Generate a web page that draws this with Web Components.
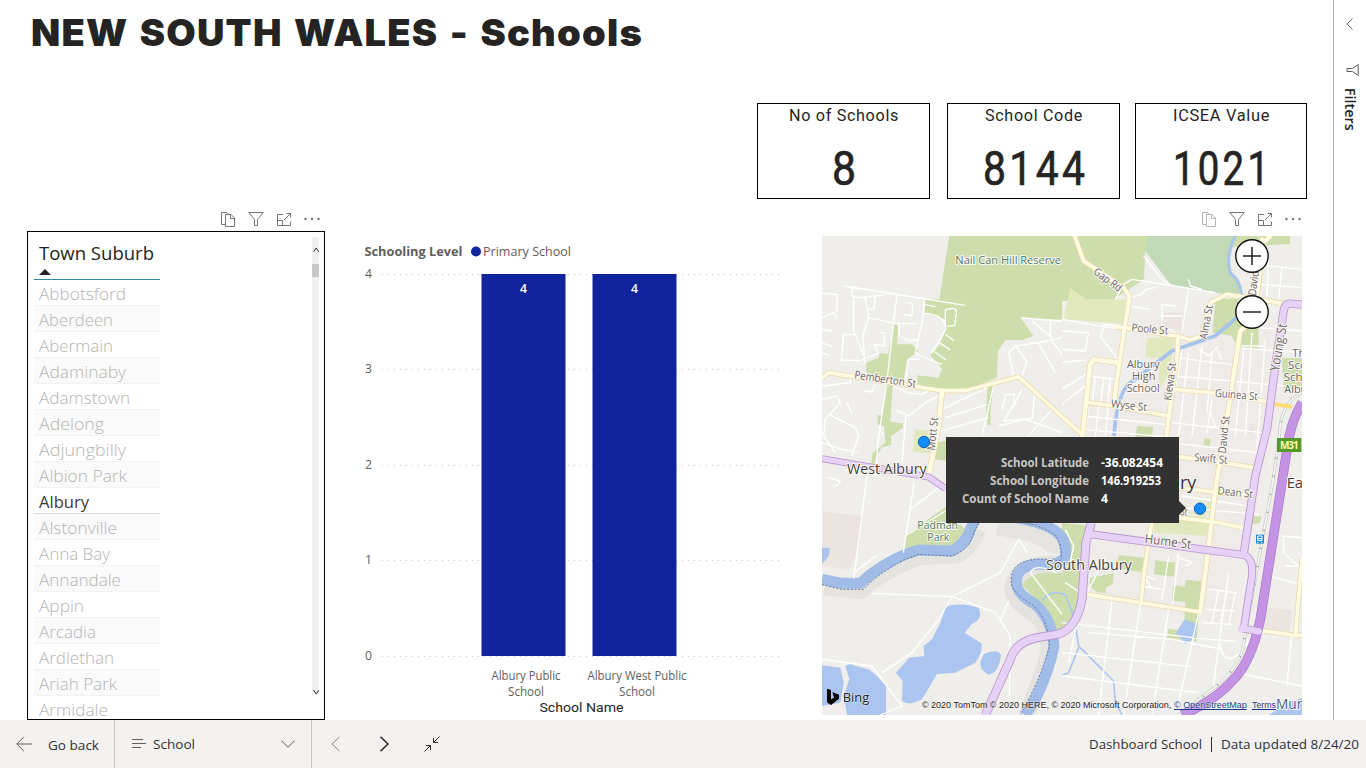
<!DOCTYPE html>
<html lang="en">
<head>
<meta charset="utf-8">
<title>New South Wales - Schools</title>
<style>
html,body{margin:0;height:100%;overflow:hidden;background:#fff}
body{font-family:"Open Sans","Noto Sans",sans-serif;color:#252423}
</style>
</head>
<body>
<school-report></school-report>
<script>
const define = (name, html, setup) => customElements.define(name, class extends HTMLElement {
  connectedCallback() {
    if (this.shadowRoot) return;
    const root = this.attachShadow({mode: 'open'});
    root.innerHTML = typeof html === 'function' ? html(this) : html;
    if (setup) setup(this, root);
  }
});

/* One line of text, stretched horizontally to the width in its "w" attribute. */
define('fit-text', el => `<style>
:host{display:block;white-space:nowrap;width:${el.getAttribute('w')}px}
span{display:inline-block;transform-origin:0 50%}
</style><span><slot></slot></span>`, (el, root) => {
  const s = root.querySelector('span');
  const w = s.getBoundingClientRect().width;
  if (w) s.style.transform = `scaleX(${el.getAttribute('w') / w})`;
});

const icons = {
  copy: '<path d="M5.500 13.500H1.500V1.500H7l2.500 2.500M5.500 3.500H11l3.500 3.500V15.500H5.500ZM10.500 3.500V7.500H14.500"/>',
  filter: '<path d="M.8 1.500H15.300L9.500 8.500V14.500H6.500V8.500Z"/>',
  focus: '<path d="M7 3.500H1.500V14.500H14.500V10.500M1.500 9.500H6.500V14.500M8 9L14.300 2.700M10.500 2.500H14.500V6.500"/>',
  more: '<g fill="currentColor" stroke="none"><circle cx="1.500" cy="8" r="1.200"/><circle cx="8" cy="8" r="1.200"/><circle cx="14.500" cy="8" r="1.200"/></g>',
  back: '<path d="M16 8H.8M8 .8L.8 8L8 15.200"/>',
  list: '<path d="M1 3.500H12M1 7.500H15M1 11.500H10"/>',
  down: '<path d="M1.300 4.500L8 11.300L14.700 4.500"/>',
  prev: '<path d="M11.500 .8L4 8L11.500 15.200"/>',
  next: '<path d="M4.500 .8L12 8L4.500 15.200"/>',
  shrink: '<path d="M15.500 .5L9.500 6.500M9.500 1.800V6.500H14.200M.5 15.500L6.500 9.500M1.800 9.500H6.500V14.200"/>',
  chevron: '<path d="M10.500 2.500L5 8L10.500 13.500"/>',
  funnelSide: '<path d="M14.200 2.500V13.500L8.500 9.500H3V6.500H8.500Z"/>'
};
define('line-icon', el => `<style>:host{display:block;width:16px;height:16px;color:#605e5c}svg{display:block;fill:none;stroke:currentColor;stroke-width:${el.getAttribute('weight') || 1}}</style>
<svg width="16" height="16" viewBox="0 0 16 16">${icons[el.getAttribute('name')]}</svg>`);

define('visual-tools', el => `<style>:host{display:flex;gap:12px;justify-content:flex-end;box-sizing:border-box;padding-top:12px}line-icon{opacity:.85}line-icon.dim{opacity:${el.hasAttribute('dim') ? .45 : .85}}</style>
<line-icon class="dim" name="copy"></line-icon><line-icon name="filter"></line-icon><line-icon name="focus"></line-icon><line-icon name="more"></line-icon>`);

define('stat-card', el => `<style>
:host{display:flex;flex-direction:column;align-items:center;box-sizing:border-box;height:96px;border:1px solid #000;background:#fff;font-family:Roboto,sans-serif}
.t{font-size:17px;line-height:24px;margin-top:-1px;letter-spacing:.7px}
.v{font-size:48px;line-height:56px;margin-top:14px;-webkit-text-stroke:.7px #252423}
</style><fit-text class="t" w="${el.getAttribute('tw')}">${el.getAttribute('label')}</fit-text>
<fit-text class="v" w="${el.getAttribute('vw')}"><span style="letter-spacing:4px;margin-right:-4px"><slot></slot></span></fit-text>`);

const towns = [['Abbotsford',87],['Aberdeen',74],['Abermain',74],['Adaminaby',87],['Adamstown',91],['Adelong',65],['Adjungbilly',87],['Albion Park',88],['Albury',50],['Alstonville',78],['Anna Bay',71],['Annandale',82],['Appin',45],['Arcadia',57],['Ardlethan',75],['Ariah Park',78],['Armidale',69]];
define('town-list', `<style>
:host{display:flex;justify-content:space-between;box-sizing:border-box;width:298px;height:489px;border:1px solid #000;overflow:hidden;padding:5px 5px 0 6px}
.col{width:126px}
.head{height:42px;border-bottom:1px solid #2f8aa0;box-sizing:content-box}
.head fit-text{font-size:18px;line-height:32px;padding-left:4.500px}
.tri{width:0;margin-left:5px;border:6.500px solid transparent;border-top:0;border-bottom:6px solid #252423}
.row{height:26px;box-sizing:border-box;border-bottom:1px solid #f3f3f3;padding-left:4.500px;font-size:16.500px;line-height:28px;color:#b5b4b3;font-weight:300}
.row:nth-child(odd){background:#fafafa}
.row.on{color:#3a3938;border-color:#ddd;background:#fff;font-weight:400}
.bar{width:7px;height:458px;background:#f0f0f0;display:flex;flex-direction:column}
.bar svg{display:block;fill:none;stroke:#333}
.thumb{height:13px;background:#c8c8c8;margin:11px 0 auto}
</style>
<div class="col"><div class="head"><fit-text w="115">Town Suburb</fit-text><div class="tri"></div></div>
${towns.map(([n, w]) => `<div class="row${n === 'Albury' ? ' on' : ''}"><fit-text w="${w}">${n}</fit-text></div>`).join('')}</div>
<div class="bar"><svg width="7" height="16"><path d="M1.500 15L4.200 11L7 15"/></svg><div class="thumb"></div><svg width="7" height="5"><path d="M1.500 0L4.200 4L7 0"/></svg></div>`);

/* Column chart: school count by school name. */
const label = (x, y, w, t, extra = '') => `<text x="${x}" y="${y}" textLength="${w}" lengthAdjust="spacingAndGlyphs" ${extra}>${t}</text>`;
define('school-chart', `<style>:host{display:block;width:440px;height:490px}svg{display:block;font-size:12px;fill:#605e5c}.g{stroke:#c4c4c4;stroke-dasharray:1 5}</style>
<svg width="440" height="490" viewBox="0 0 440 490">
${label(14.500, 26, 98, 'Schooling Level', 'font-weight="700" font-size="12.500"')}
<circle cx="126" cy="21.500" r="5" fill="#12239e"/>${label(133, 26, 88, 'Primary School', 'font-size="12.500"')}
${[4, 3, 2, 1, 0].map((v, i) => `<path class="g" d="M32 ${[44.500, 139.500, 235.500, 330.500, 426.500][i]}H431"/>${label(15, [48, 143, 239, 334, 430][i], 7, v)}`).join('')}
<path d="M131.500 44H215.500V426H131.500ZM242.500 44H326.500V426H242.500Z" fill="#12239e"/>
<g fill="#fff" font-weight="600">${label(170, 63, 7, 4)}${label(281, 63, 7, 4)}</g>
${label(141.500, 450, 69, 'Albury Public')}${label(158, 466, 36, 'School')}
${label(237.500, 450, 99, 'Albury West Public')}${label(269, 466, 36, 'School')}
<g fill="#252423" font-family="Roboto" font-size="13">${label(189.500, 482, 84, 'School Name')}</g>
</svg>`);

/* Street map. Drawing units are thirds of a pixel. */
const parks = `M382 0H1403L1405 24L970 45L966 129L958 135L872 193L720 195V251L596 245L634 300L600 312H550L528 345L525 425L430 462L360 460L285 445L287 418L350 425L360 398L325 358L350 330L368 290L371 250L308 232L310 190L352 190Z
M215 266L228 268L225 325L270 325L290 345L255 370L245 432L200 425L133 410L132 380L170 365L172 352L198 354Z
M193 448L212 450L205 558L243 562V575L207 600L208 626L178 634L156 684L148 720H143L152 650L190 620L186 570L167 565V538L180 538Z
M497 450L515 447L505 530L506 568L497 566L492 520Z
M338 620L372 614V674L336 670Z
M253 896L372 812V850L420 870L452 900L420 930L244 950Z
M1180 188H1250L1260 245L1300 270H1310V340L1246 335L1230 300L1172 290Z
M945 570L993 573L990 604H940Z M1147 607L1166 610L1164 630L1145 628Z
M1380 365L1440 366V460H1385Z
M600 1005L680 980L720 1000V860L810 870L798 910L775 1100L745 1160L700 1200L670 1130L630 1080L596 1040Z
M890 957L964 965L960 1008L886 998Z M1000 973L1060 980L1055 1022L996 1015Z
M804 1025L875 1012L872 1045L852 1055L850 1072L826 1068L804 1054Z
M1054 1048L1088 1052L1092 1032L1140 1036L1130 1128L1124 1216L1035 1206L1039 1178L1086 1184L1090 1098L1050 1094Z
M1292 840L1318 842L1314 860L1290 865Z`;
const pale = `M745 155L790 190L910 190L904 263L726 250L730 220Z M975 305L1060 302L1040 420L1010 460L1012 365H970Z M278 580L330 585L322 652L272 648Z M996 830L1150 842L1155 790L1095 805L1080 825L1170 850L1150 900L996 890Z M1100 800L1178 795L1170 835L1090 825Z`;
const minor = `M68 150L430 208M90 152V180L130 187L140 245L122 300L130 385M95 180V285L130 370M225 172L193 450L170 600L160 720M308 188L300 260L280 350L295 360L360 385M308 232Q370 235 371 280L330 350M370 295L396 314M352 320L385 342M338 347L372 372M305 205L340 212M370 222Q405 210 403 230L398 268L370 272V222M0 172L45 175V225L0 246M30 228L45 245M0 280L30 285M0 320L32 332M0 352L25 358M105 185L160 180L155 220H138M155 180L185 177M138 245L220 262L285 263M250 200L272 202L270 240L245 235M230 265L232 300L265 315L290 310M65 296H100M65 296L58 372L115 374L170 352L155 325L186 330L188 290L170 290M260 370L250 432M262 370H292
M0 450L85 440L86 420M0 490L45 480L55 500L10 550L5 600L40 650M0 620L60 640L110 650M20 535L100 575L110 600L90 660M75 500L90 535M125 465L150 468L160 445M215 450L255 470L300 475L325 460M220 520L260 540L310 500L350 480M252 535L240 680M170 570L185 600M360 520L420 490L497 455M370 545L496 505M340 590L500 545M480 600L515 450M540 520L552 475L578 475L575 505L545 555L630 548L640 455M600 460L575 510M530 570L610 550L720 590M620 598L690 520M525 440L600 424M575 420L560 350L580 330L650 320L720 305M582 330L615 378L600 420M650 322L700 410M688 312L720 355M630 255L690 305M685 250V308M596 245L650 250L720 255
M965 60L1020 130L1045 145M880 190L905 145L930 130L1045 148L1180 170M1100 130L1105 150L1140 160M920 182Q960 185 970 160L1000 155M920 210L985 220M1100 155L1080 290M1020 205L1060 210M1020 240H1080M1020 205V270L1060 290M840 267H895M720 250L840 272L900 280M845 275L835 300L895 380M720 285L800 290L790 345L720 340M720 380L790 372M720 460L800 410M720 505L790 450M1067 365L1180 380L1230 385M1060 420L1390 450M1080 340L1060 460M1100 345L1070 600M1140 330L1110 600M1170 350L1155 530M1130 340L1160 360L1190 330M1185 340L1200 370M1240 335L1440 350M1265 340L1240 600M1290 290L1270 600M1330 310L1300 700M800 420L885 430M820 425L810 500M845 425L835 510M865 430L855 520M780 540L1030 565M780 580L1030 602M800 510L790 602M830 510L820 602M860 500L850 602M1050 560L1320 590M1040 620L1310 650M1165 530L1180 570L1160 575M1170 490L1155 590M1310 275L1440 285M1340 90L1440 100M1320 145L1440 155M1380 90L1370 195M1320 40L1340 50L1335 195M1250 330L1330 330
M135 720L95 1028M276 740L244 950M265 820L370 740M250 900L370 825M95 1010L165 958M20 725L55 735L40 755M150 1072L390 1082L535 1010L590 910L615 950M390 1082L520 1130L565 1200L562 1380M535 1150L560 1095M390 1082L350 1150L270 1250L180 1310M0 1270L150 1290L240 1410L175 1437M720 1135L625 1010Q640 980 700 1010L720 990
M730 880L755 930L740 1000M730 1040L790 1080M720 1160L1160 1210L1240 1215M720 1250L1110 1292M720 1320L1130 1370M780 1080L740 1280M870 1090L830 1437M955 1105L905 1437M1040 1120L990 1437M1130 1130L1070 1400M1220 1010L1170 1380M1160 1060L1245 1070M1150 1120L1240 1125M1140 1160L1230 1165M1160 1060L1240 1070L1220 1170M1190 1060L1170 1160M1215 1065L1195 1160M1190 960L1280 970M1080 780L1280 810M1080 815L1310 835M850 965L790 1080M1070 950L1050 1120M960 1050L1020 1060M970 1020L1000 1030M1060 960L1110 980L1090 990M800 1190L1050 1210L1200 1240M1190 1210Q1210 1330 1290 1200M1380 900L1440 905M1385 900V950L1440 1000M1390 990L1440 990M1340 1020L1440 1045M1410 1180L1395 1350M1240 1310L1440 1350M960 1010L990 1060M1040 960L1020 1090`;
const yellow = [
  ['M0 425L20 410L95 422L270 450L360 464H430L590 422L720 542L780 595V610', 11],
  ['M360 464L350 570L320 720', 14], ['M758 0L785 75L905 155L923 182L910 260L885 430L876 500', 12],
  ['M880 272L960 283L1035 297L1065 300L1105 312L1140 300L1150 250L1165 200L1215 175L1400 205', 11],
  ['M1067 300V350L1050 470L1032 610', 12], ['M780 610L805 385L815 370L885 380', 14],
  ['M800 500L880 510L1040 540', 11], ['M1060 460L1220 475L1345 500', 11],
  ['M1345 0L1330 15M1320 10L1310 140L1295 250L1255 285L1230 450L1205 610L1180 760L1165 890L1135 1128', 13],
  ['M1000 652L1200 680L1310 697', 11], ['M1070 755L1190 770L1290 780', 11], ['M1065 845L1190 860L1260 875', 11],
  ['M990 850L965 1020L957 1102', 11], ['M795 1075L1135 1128', 11], ['M1325 1185L1420 1198H1440M1420 1198L1440 970', 11]
];
const purple = [
  ['M0 668L100 685L200 702L320 723L370 757', 16],
  ['M1440 206L1402 203Q1388 205 1385 225L1360 390L1335 580L1300 720L1265 955', 20],
  ['M808 860L792 920L780 1090Q765 1175 710 1194L640 1206Q580 1220 565 1270L490 1437', 22],
  ['M808 895L1265 957Q1295 965 1290 1020L1265 1178L1310 1186', 19]
];
const rail = 'M1440 470Q1375 500 1372 600L1352 740L1312 960L1262 1240Q1240 1310 1170 1360L1070 1437';
const motorway = 'M1440 500Q1405 560 1395 640L1375 770L1345 960L1315 1150Q1290 1270 1240 1325Q1180 1395 1080 1437';
const strip = (a, c, extra, cap = 'round') => a.map(([d, w]) => `<path d="${d}" stroke="${c}" stroke-width="${w + extra}" fill="none" stroke-linejoin="round" stroke-linecap="${cap}"/>`).join('');
const spin = (x, y, w, a, t, size = 30, extra = '') => `<text transform="translate(${x} ${y}) rotate(${a})" textLength="${w}" lengthAdjust="spacingAndGlyphs" font-size="${size}" ${extra}>${t}</text>`;

define('street-map', `<style>
:host{display:block;position:relative;width:480px;height:479px;overflow:hidden;background:#efeeeb}
svg.map{display:block}
.lb text{paint-order:stroke;stroke:#fbfaf6;stroke-width:6px;stroke-linejoin:round;fill:#6b6460}
.zoom{position:absolute;left:412px;width:36px;height:36px}
</style>
<svg class="map" width="480" height="479" viewBox="0 0 1440 1437">
<path d="M960 250H1340V720H960Z M720 480H1380L1270 955L800 900ZM810 920H1260L1240 1170L780 1080Z" fill="#eeeae7" opacity=".6"/>
<path d="M0 825L120 840L110 940L80 1000L0 990Z M868 192L912 194L908 228L870 224Z M1030 228L1080 230L1075 285L1010 265Z M1330 1115L1410 1122L1405 1185L1325 1180Z M1285 560L1300 565L1290 600L1280 595Z" fill="#ece4e1"/>
<path d="${parks}" fill="#cdddab"/><path d="${pale}" fill="#e2e8bd"/>
<path d="M978 0H1236L1218 50V95L1260 165L1240 180L1045 145L970 45Z" fill="#c2d9b8"/>
<path d="M1240 0Q1210 60 1225 110Q1260 140 1258 180" fill="none" stroke="#a9c4ea" stroke-width="9"/>
<path d="M876 600Q885 470 925 440L1050 345L1180 300L1250 240" fill="none" stroke="#a6c3ee" stroke-width="11"/>
<g fill="none" stroke="#e4e3df" stroke-linejoin="round" transform="translate(6 22)"><path d="M0 1036L110 1048Q150 1010 230 968L290 945L400 940Q450 910 466 860" stroke-width="40"/><path d="M520 850L560 858Q700 880 690 930M720 965Q590 950 566 1030Q560 1070 640 1120Q690 1170 666 1260L600 1437" stroke-width="50"/></g>
<g fill="none" stroke="#a1bce6" stroke-width="33" stroke-linejoin="round"><path d="M0 1030L60 1042H115Q170 990 250 955L290 942L390 945Q435 920 445 880L470 830"/><path d="M540 840Q650 850 700 885Q735 910 730 960Q720 990 650 984Q570 990 586 1055Q595 1080 640 1105Q690 1150 696 1230Q680 1310 640 1390L610 1437"/></g>
<g fill="none" stroke="#66789a" stroke-width="3" stroke-dasharray="6 5"><path d="M0 1046L60 1060H125Q170 1010 250 970L290 955L390 960Q445 940 455 890L480 840M540 852Q650 858 700 898Q720 920 718 970M718 975Q560 950 568 1040Q570 1070 630 1105Q680 1150 682 1230Q660 1320 595 1437"/></g>
<g fill="#acc5f0"><path d="M372 1112Q410 1098 470 1115Q485 1148 450 1163L428 1190L478 1222Q485 1245 460 1280L400 1310L345 1314Q325 1350 300 1390Q260 1412 240 1395L242 1335L222 1310L262 1265L307 1260L305 1230L330 1210L355 1160Z"/><path d="M485 1255Q530 1235 537 1260Q530 1310 500 1316Q470 1300 476 1275Z"/><path d="M0 1288L55 1295L65 1340L55 1400L0 1410ZM70 1290Q85 1280 100 1290L140 1300L165 1320L192 1350V1437H75L65 1380L82 1330Z"/><path d="M0 935L22 935Q28 960 0 982Z"/><path d="M1088 1150L1125 1165L1120 1205L1090 1225L1062 1190Z"/><path d="M1340 1437L1390 1405L1440 1385V1437Z"/></g>
<path d="M762 1180L770 1230L875 1335L880 1400L900 1437M770 1235L740 1310L720 1318M660 1095Q680 1060 730 1075L755 1140" fill="none" stroke="#acc5f0" stroke-width="5"/>
<path d="${minor}" fill="none" stroke="#fff" stroke-width="4" stroke-linejoin="round"/>
<path d="${rail}" fill="none" stroke="#c9c9c8" stroke-width="9"/><path d="${rail}" fill="none" stroke="#f6f6f5" stroke-width="5"/><path d="${rail}" fill="none" stroke="#999" stroke-width="7" stroke-dasharray="3 52"/>
${strip(yellow, '#ead6a4', 4, 'butt')}${strip(yellow, '#fffbe2', 0)}
<path d="M1355 504L1410 512" stroke="#ffdc75" stroke-width="12"/>
<path d="${motorway}" fill="none" stroke="#a878ca" stroke-width="29"/><path d="${motorway}" fill="none" stroke="#c493e4" stroke-width="25"/>
${strip(purple, '#b995cd', 5, 'butt')}${strip(purple, '#e6d1f7', 0)}<circle cx="1260" cy="1178" r="12" fill="#e6d1f7"/>
<g class="lb" font-family="'Open Sans','Noto Sans',sans-serif">
<g font-size="35">${label(400, 84, 317, 'Nail Can Hill Reserve', 'style="fill:#527a5e"')}${label(286, 879, 122, 'Padman', 'style="fill:#527a5e"')}${label(316, 915, 66, 'Park', 'style="fill:#527a5e"')}
${label(915, 396, 98, 'Albury')}${label(930, 432, 70, 'High')}${label(914, 468, 99, 'School')}
${label(1411, 363, 58, 'The')}${label(1398, 399, 86, 'Scots')}${label(1385, 435, 108, 'School')}${label(1387, 471, 98, 'Albury')}</g>
${spin(96, 427, 186, 8.500, 'Pemberton St', 33)}${spin(338, 644, 100, -84, 'Mott St', 33)}
${spin(812, 112, 96, 36, 'Gap Rd', 33)}${spin(928, 286, 110, 5, 'Poole St', 33)}${spin(866, 514, 108, 6, 'Wyse St', 33)}
${spin(1155, 311, 103, -80, 'Alma St', 33)}${spin(1048, 495, 115, -83, 'Kiewa St', 33)}${spin(1178, 482, 129, 5, 'Guinea St', 33)}${spin(1211, 653, 113, -84, 'David St', 33)}${spin(1301, 180, 74, -82, 'David', 33)}
${spin(1370, 407, 144, -80, 'Young St', 39)}${spin(1116, 675, 100, 5, 'Swift St', 33)}${spin(1186, 775, 106, 6, 'Dean St', 33)}${spin(1055, 835, 40, 6, 'e St', 33)}${spin(967, 921, 140, 7, 'Hume St', 39)}
<g font-size="42" style="font-weight:400">${label(75, 713, 239, 'West Albury', 'style="fill:#45413f"')}${label(672, 1003, 257, 'South Albury', 'style="fill:#45413f"')}${label(1394, 756, 86, 'East', 'style="fill:#45413f"')}</g>
<text x="1074" y="760" font-size="54" style="fill:#373331">ry</text>
<text x="1362" y="1419" font-size="41" style="fill:#4560a0">Murr</text><text x="1358" y="1466" font-size="40" style="fill:#4560a0">River</text>
</g>
<path d="M1365 606H1438V648H1365Z" fill="#55992a"/><text x="1374" y="638" font-family="Open Sans" font-weight="700" font-size="30" fill="#ffffa8" textLength="56">M31</text>
<rect x="1302" y="896" width="24" height="27" fill="#188bd2"/><path d="M1307 900H1320V914H1307ZM1309 918L1305 922M1318 918L1322 922M1308 908H1320" fill="none" stroke="#fff" stroke-width="3"/>
<g fill="#118dff" stroke="#1262ad" stroke-width="3"><circle cx="306" cy="618" r="17"/><circle cx="1134" cy="818" r="17"/></g>
<path d="M15 1358L27 1362V1390L36 1385L31 1368L51 1376V1388L27 1407L15 1399Z" fill="#000"/>
<g font-family="Open Sans" font-size="40" fill="#252423">${label(62, 1399, 80, 'Bing', 'stroke="#fff" stroke-opacity=".6" stroke-width="3" paint-order="stroke"')}</g>
<g font-family="Liberation Sans" font-size="29" fill="#222" stroke="#fff" stroke-opacity=".6" stroke-width="3" paint-order="stroke">${label(300, 1416, 748, '© 2020 TomTom © 2020 HERE, © 2020 Microsoft Corporation,')}<g fill="#173a8c">${label(1056, 1416, 218, '© OpenStreetMap')}${label(1290, 1416, 72, 'Terms')}</g></g>
<path d="M1056 1420.500H1274M1290 1420.500H1362" stroke="#173a8c" stroke-width="3"/>
</svg>
<svg class="zoom" style="top:2px" viewBox="0 0 36 36"><circle cx="18" cy="18" r="16.200" fill="#fff" stroke="#111" stroke-width="1.400"/><path d="M9 18H27M18 9V27" stroke="#222" stroke-width="1.500"/></svg>
<svg class="zoom" style="top:58px" viewBox="0 0 36 36"><circle cx="18" cy="18" r="16.200" fill="#fff" stroke="#111" stroke-width="1.400"/><path d="M9 18H27" stroke="#222" stroke-width="1.500"/></svg>
<slot></slot>`);

define('map-tip', `<style>
:host{position:absolute;left:124px;top:201px;width:233px;height:86px;box-sizing:border-box;padding:17px 12px 0 15px;background:#323232;display:grid;grid-template-columns:128px auto;grid-auto-rows:18px;column-gap:12px;font-size:11.500px;line-height:18px;font-weight:700;color:#fff}
:host::after{content:"";position:absolute;left:233px;top:64px;border:7px solid transparent;border-left-color:#323232;border-right:0}
.k{color:#c8c6c4;justify-self:end}
</style>
<fit-text class="k" w="88">School Latitude</fit-text><fit-text w="62">-36.082454</fit-text>
<fit-text class="k" w="99">School Longitude</fit-text><fit-text w="60">146.919253</fit-text>
<fit-text class="k" w="127">Count of School Name</fit-text><fit-text w="7">4</fit-text>`);

define('filters-pane', `<style>
:host{display:flex;flex-direction:column;align-items:center;box-sizing:border-box;width:33px;border-left:1px solid #b3b0ad;padding-top:16px}
.f{margin-top:30px;margin-left:4px}
.t{writing-mode:vertical-rl;font-size:14.300px;line-height:18px;margin-top:10px;margin-left:0;font-weight:600}
</style><line-icon name="chevron"></line-icon><line-icon class="f" name="funnelSide"></line-icon><div class="t">Filters</div>`);

define('report-footer', `<style>
:host{display:flex;height:48px;background:#f3f2f1;font-size:13.500px;color:#323130}
.cell{display:flex;align-items:center;box-sizing:border-box;height:48px}
.back{width:115px;border-right:1px solid #c8c6c4;padding-left:16px;gap:16px}
.back fit-text{padding-top:2px}
.page{width:197px;border-right:1px solid #c8c6c4;padding:0 15px 0 16px;gap:6px}
.page line-icon:last-child{margin-left:auto}
.nav{padding-left:16px;gap:32px}
.end{margin-left:auto;padding-right:7px;gap:9px}
.sep{width:1px;height:15px;background:#323130}
</style>
<div class="cell back"><line-icon name="back"></line-icon><fit-text w="51">Go back</fit-text></div>
<div class="cell page"><line-icon name="list"></line-icon><fit-text w="42">School</fit-text><line-icon name="down"></line-icon></div>
<div class="cell nav"><line-icon name="prev" style="opacity:.7"></line-icon><line-icon name="next" weight="1.500" style="color:#252423"></line-icon><line-icon name="shrink" style="color:#323130"></line-icon></div>
<div class="cell end"><fit-text w="113">Dashboard School</fit-text><div class="sep"></div><fit-text w="138">Data updated 8/24/20</fit-text></div>`);

define('school-report', `<style>
:host{display:grid;grid-template:720px 48px / 1333px 33px;width:1366px;height:768px;background:#fff}
main{display:flex;flex-direction:column;overflow:hidden}
h1{margin:0;height:103px;box-sizing:border-box;padding:9px 0 0 31px;font:900 37px/48px Inter,sans-serif;letter-spacing:1.200px;word-spacing:2.500px}
.cards{display:grid;grid-template-columns:173px 173px 172px;column-gap:17px;padding-left:757px}
.cards>:last-child{margin-left:-2px;margin-right:2px;width:172px}
.visuals{display:flex;padding-left:27px}
.a{width:298px}.a visual-tools{height:32px;padding-right:5px}
school-chart{margin:31px 32px 0 25px}
.m{width:480px}.m visual-tools{height:37px;padding-right:1px}
report-footer{grid-column:1/3}
</style>
<main><h1><fit-text w="612">NEW SOUTH WALES - Schools</fit-text></h1>
<div class="cards"><stat-card label="No of Schools" tw="110" vw="24">8</stat-card><stat-card label="School Code" tw="98" vw="102">8144</stat-card><stat-card label="ICSEA Value" tw="97" vw="96">1021</stat-card></div>
<div class="visuals"><div class="a"><visual-tools></visual-tools><town-list></town-list></div>
<school-chart></school-chart>
<div class="m"><visual-tools dim></visual-tools><street-map><map-tip></map-tip></street-map></div></div></main>
<filters-pane></filters-pane>
<report-footer></report-footer>`);
</script>
</body>
</html>
